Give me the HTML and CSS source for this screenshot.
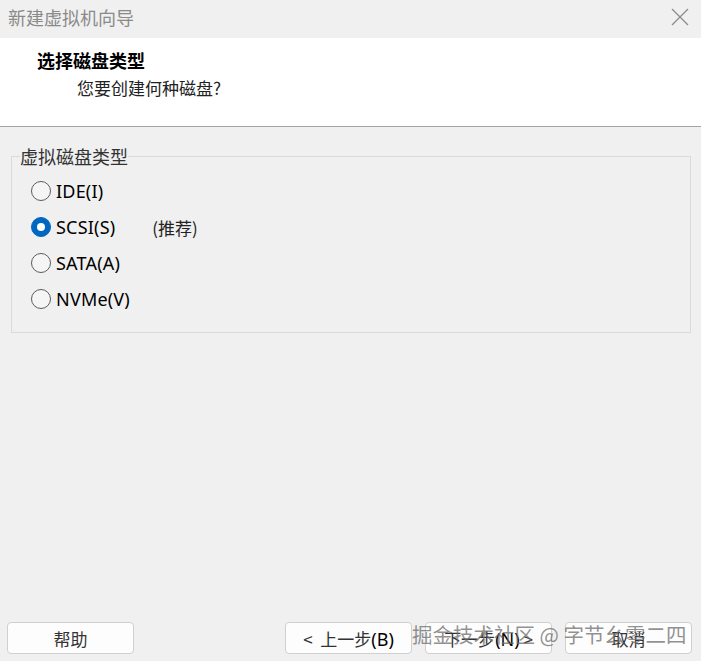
FILE: index.html
```html
<!DOCTYPE html>
<html lang="zh-CN">
<head>
  <meta charset="UTF-8" />
  <title>新建虚拟机向导</title>
  <link rel="stylesheet" href="styles.css">
</head>
<body>
  <div class="window">
    <div class="titlebar">
      <span class="title">新建虚拟机向导</span>
      <svg class="close" width="18" height="18" viewBox="0 0 18 18">
        <path d="M1 1 L17 17 M17 1 L1 17" stroke="#8c8c8c" stroke-width="1.3" fill="none" />
      </svg>
    </div>

    <div class="header">
      <h1>选择磁盘类型</h1>
      <p>您要创建何种磁盘?</p>
    </div>

    <div class="content">
      <fieldset class="group">
        <legend>虚拟磁盘类型</legend>
        <div class="option"><span class="radio"></span><span class="label">IDE(I)</span></div>
        <div class="option"><span class="radio checked"></span><span class="label">SCSI(S)</span><span class="note">(推荐)</span></div>
        <div class="option"><span class="radio"></span><span class="label">SATA(A)</span></div>
        <div class="option"><span class="radio"></span><span class="label">NVMe(V)</span></div>
      </fieldset>
    </div>

    <div class="footer">
      <button class="btn">帮助</button>
      <div class="spacer"></div>
      <button class="btn">&lt;&nbsp; 上一步<span class="latin">(B)</span></button>
      <button class="btn">下一步<span class="latin">(N)</span> &gt;</button>
      <button class="btn">取消</button>
      <div class="watermark">掘金技术社区 @ 字节幺零二四</div>
    </div>
  </div>
</body>
</html>
```

FILE: styles.css
```css
body {
  margin: 0;
  background: #f0f0f0;
  font-family: "Noto Sans CJK SC", "Noto Sans", sans-serif;
  color: #1a1a1a;
}
.window {
  width: 701px;
  height: 661px;
  display: flex;
  flex-direction: column;
}
.titlebar {
  height: 38px;
  display: flex;
  align-items: center;
  justify-content: space-between;
  padding: 0 12px 0 8px;
  background: #f0f0f0;
}
.title {
  font-size: 18px;
  color: #8a8a8a;
  margin-top: -4px;
}
.close {
  margin-top: -4px;
}
.header {
  height: 89px;
  background: #fff;
  border-bottom: 1px solid #a3a3a3;
  box-sizing: border-box;
  padding-top: 11px;
}
.header h1 {
  margin: 0 0 0 37px;
  font-size: 18px;
  line-height: 22px;
  font-weight: bold;
  color: #000;
}
.header p {
  margin: 6px 0 0 77px;
  font-size: 17px;
  line-height: 22px;
  color: #222;
}
.content {
  flex: 1;
  padding: 18px 10px 0 11px;
}
.group {
  margin: 0;
  padding: 6px 0 14px 19px;
  border: 1px solid #dadada;
  height: 188px;
  box-sizing: border-box;
}
.group legend {
  padding: 0;
  margin-left: -11px;
  font-size: 18px;
  line-height: 22px;
  color: #333;
}
.option {
  display: flex;
  align-items: center;
  height: 36px;
}
.radio {
  border: 1px solid #5c5c5c;
  border-radius: 50%;
  background: #f5f5f5;
  box-sizing: border-box;
  width: 20px;
  height: 20px;
  position: relative;
}
.radio.checked {
  background: #0067c0;
  border-color: #0067c0;
}
.radio.checked::after {
  content: "";
  position: absolute;
  left: 5px;
  top: 5px;
  width: 8px;
  height: 8px;
  border-radius: 50%;
  background: #fff;
}
.label {
  margin-left: 5px;
  font-family: "Noto Sans", sans-serif;
  font-size: 18px;
  letter-spacing: 0.2px;
  color: #000;
}
.note {
  margin-left: 37px;
  font-size: 17px;
  color: #222;
}
.footer {
  position: relative;
  display: flex;
  align-items: center;
  gap: 13px;
  padding: 0 9px 7px 7px;
}
.spacer {
  flex: 1;
}
.btn {
  width: 127px;
  height: 32px;
  background: #fdfdfd;
  border: 1px solid #d0d0d0;
  border-radius: 4px;
  font-family: "Noto Sans CJK SC", sans-serif;
  font-size: 17px;
  color: #333;
  padding: 0;
}
.btn .latin {
  font-family: "Noto Sans", sans-serif;
  font-size: 18px;
  color: #000;
}
.watermark {
  position: absolute;
  left: 412px;
  top: -3px;
  font-size: 20.5px;
  color: rgba(110, 110, 110, 0.75);
  white-space: nowrap;
  pointer-events: none;
}
```
